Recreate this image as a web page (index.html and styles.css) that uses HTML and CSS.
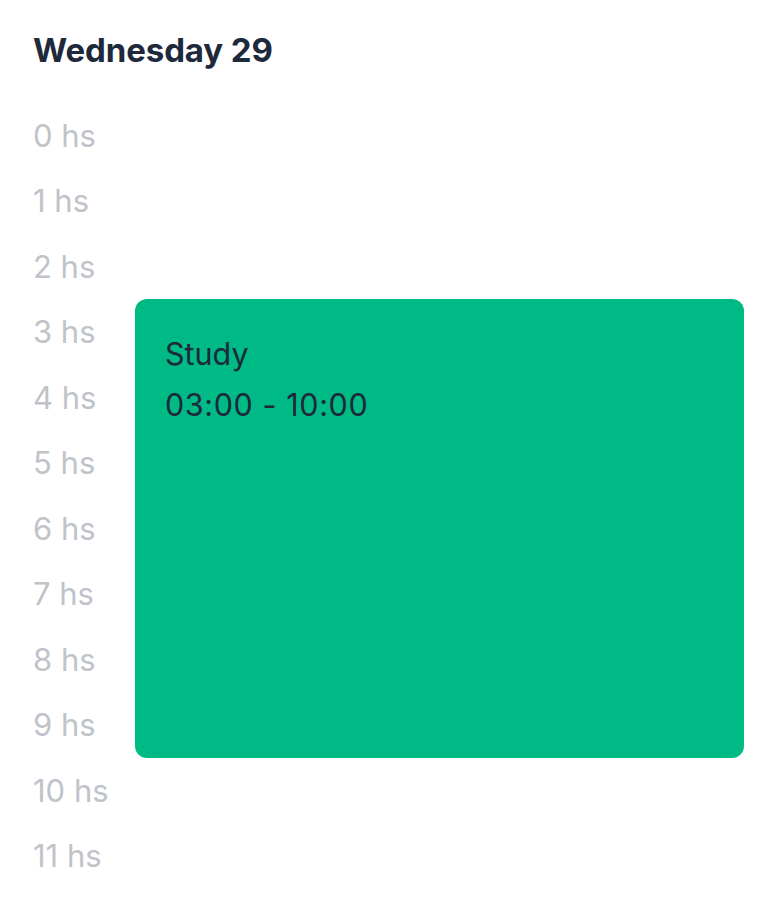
FILE: index.html
```html
<!DOCTYPE html>
<html lang="en">
<head>
<meta charset="utf-8">
<title>Wednesday 29</title>
<link rel="stylesheet" href="styles.css">
</head>
<body>
<main class="day">
  <h1 class="day-title">Wednesday 29</h1>
  <div class="schedule">
    <div class="hour" style="grid-row: 1">0 hs</div>
    <div class="hour" style="grid-row: 2">1 hs</div>
    <div class="hour" style="grid-row: 3">2 hs</div>
    <div class="hour" style="grid-row: 4">3 hs</div>
    <div class="hour" style="grid-row: 5">4 hs</div>
    <div class="hour" style="grid-row: 6">5 hs</div>
    <div class="hour" style="grid-row: 7">6 hs</div>
    <div class="hour" style="grid-row: 8">7 hs</div>
    <div class="hour" style="grid-row: 9">8 hs</div>
    <div class="hour" style="grid-row: 10">9 hs</div>
    <div class="hour" style="grid-row: 11">10 hs</div>
    <div class="hour" style="grid-row: 12">11 hs</div>
    <div class="event" style="grid-row: 4 / 11">
      <div class="event-name">Study</div>
      <div class="event-time">03:00 - 10:00</div>
    </div>
  </div>
</main>
</body>
</html>
```

FILE: styles.css
```css
* { box-sizing: border-box; }
html, body {
  margin: 0;
  padding: 0;
  background: #ffffff;
}
body {
  font-family: Inter, "Noto Sans", sans-serif;
  color: #1e293b;
}
.day {
  padding: 30px 32px 0 33px;
}
.day-title {
  margin: 0;
  font-size: 33px;
  line-height: 40px;
  font-weight: 700;
  letter-spacing: -0.1px;
  color: #1e293b;
}
.schedule {
  margin-top: 32.5px;
  display: grid;
  grid-template-columns: 102px 1fr;
  grid-template-rows: repeat(12, 65.5px);
}
.hour {
  grid-column: 1;
  display: flex;
  align-items: center;
  font-size: 31px;
  color: #bfc3ca;
}
.event {
  grid-column: 2;
  background: #00ba85;
  border-radius: 12px;
  padding: 34px 30px;
  display: flex;
  flex-direction: column;
  gap: 9px;
}
.event-name, .event-time {
  font-size: 30.5px;
  line-height: 42px;
  color: #1e293b;
}
.event-time {
  letter-spacing: 0.6px;
}
```
